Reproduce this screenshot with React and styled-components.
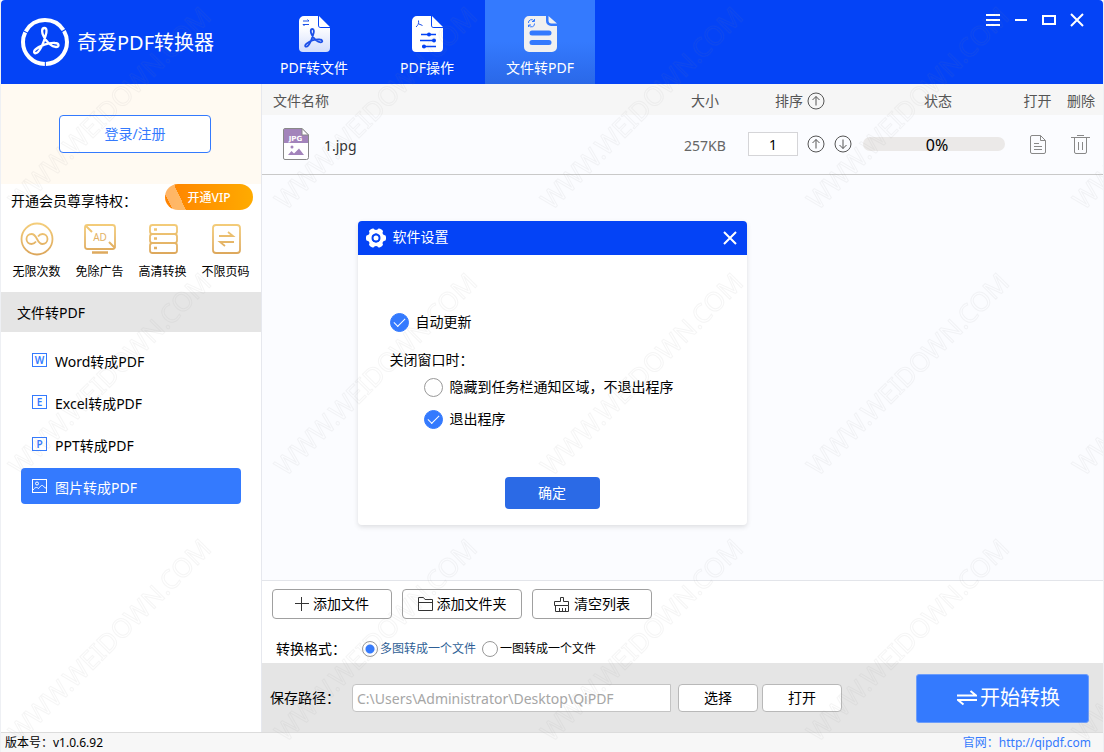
import React, { useState } from "react";
import styled, { createGlobalStyle, css } from "styled-components";

const GlobalStyle = createGlobalStyle`
  *, *::before, *::after { box-sizing: border-box; }
  body {
    margin: 0;
    background: #fff;
    color: #000;
    font: 14px/20px "Noto Sans", "Noto Sans CJK SC", sans-serif;
  }
  button, input { font: inherit; color: inherit; margin: 0; }
  button { cursor: pointer; padding: 0; }
  svg { display: block; flex: none; }
`;

const Window = styled.div`
  position: relative;
  display: flex;
  flex-direction: column;
  min-height: 100vh;
  border-left: 1px solid #eef0f4;
  border-right: 1px solid #eef0f4;
  overflow: hidden;
`;

const Header = styled.header`
  display: flex;
  align-items: stretch;
  height: 84px;
  background: #0443f6;
  color: #fff;
  border-radius: 4px 4px 0 0;
`;

const Brand = styled.div`
  display: flex;
  align-items: center;
  gap: 8px;
  width: 258px;
  padding-left: 20px;
  font-size: 20px;
  line-height: 28px;
`;

const BrandName = styled.span`
  padding-top: 2px;
`;

const Tabs = styled.nav`
  display: flex;
  gap: 3px;
  flex: 1;
`;

const Tab = styled.button`
  display: flex;
  flex-direction: column;
  align-items: center;
  gap: 6px;
  width: 110px;
  padding-top: 16px;
  border: 0;
  background: ${(p) => (p.$active ? "linear-gradient(#347afe 50%, #2a68e8)" : "none")};
`;

const WindowControls = styled.div`
  display: flex;
  height: 40px;
  padding-right: 12px;
`;

const IconButton = styled.button`
  display: flex;
  align-items: center;
  justify-content: center;
  width: ${(p) => p.$width || 28}px;
  border: 0;
  background: none;
`;

const Body = styled.div`
  display: flex;
  flex: 1;
`;

const Sidebar = styled.aside`
  flex: none;
  width: 261px;
  border-right: 1px solid #e6e8ee;
  background: #fff;
`;

const LoginPanel = styled.div`
  display: flex;
  justify-content: center;
  height: 100px;
  padding: 31px 0 31px 8px;
  background: #fffaf2;
`;

const LoginButton = styled.button`
  width: 152px;
  height: 38px;
  border: 1px solid #347afe;
  border-radius: 4px;
  background: #fff;
  color: #347afe;
`;

const VipHead = styled.div`
  display: flex;
  justify-content: space-between;
  padding: 0 8px 0 10px;
  height: 38px;
`;

const VipTitle = styled.div`
  padding-top: 7px;
`;

const VipButton = styled.button`
  width: 88px;
  height: 26px;
  padding-top: 1px;
  border: 0;
  border-radius: 13px;
  color: #fff;
  font-size: 12px;
  font-weight: 500;
  background:
    linear-gradient(65deg, transparent 7px, rgba(255, 255, 255, 0.4) 7px 19px, transparent 19px),
    linear-gradient(90deg, #ff8200, #ffab00);
`;

const Perks = styled.ul`
  display: grid;
  grid-template-columns: repeat(4, 1fr);
  height: 70px;
  margin: 0;
  padding: 0 4px;
  list-style: none;
`;

const Perk = styled.li`
  display: flex;
  flex-direction: column;
  align-items: center;
  gap: 6px;
  font-size: 12px;
`;

const SectionTitle = styled.h2`
  margin: 0;
  padding: 11px 16px 9px;
  background: #e5e5e5;
  font-size: 14px;
  font-weight: 400;
`;

const Menu = styled.nav`
  display: flex;
  flex-direction: column;
  gap: 6px;
  padding: 10px 20px;
`;

const MenuItem = styled.button`
  display: flex;
  align-items: center;
  gap: 8px;
  height: 36px;
  padding: 0 11px;
  border: 0;
  border-radius: 4px;
  background: ${(p) => (p.$active ? "#347afe" : "none")};
  color: ${(p) => (p.$active ? "#fff" : "#000")};
`;

const MenuLabel = styled.span`
  padding-top: 3px;
`;

const Main = styled.main`
  display: flex;
  flex: 1;
  flex-direction: column;
  min-width: 0;
`;

const ListArea = styled.section`
  flex: 1;
  background: #fbfcff;
`;

const FileTable = styled.table`
  width: 100%;
  table-layout: fixed;
  border-collapse: collapse;
`;

const Th = styled.th`
  width: ${(p) => (p.$width ? `${p.$width}px` : "auto")};
  height: 31px;
  padding: ${(p) => (p.$start ? "3px 0 0 11px" : "3px 0 0")};
  background: #f6f6f6;
  color: #555;
  font-weight: 400;
  text-align: ${(p) => (p.$start ? "left" : "center")};
`;

const Td = styled.td`
  height: 59px;
  padding: ${(p) => (p.$text ? "3px 0 0" : "0")};
  border-bottom: 1px solid #c9c9c9;
  color: ${(p) => (p.$muted ? "#666" : "#333")};
  text-align: center;
`;

const FileName = styled.div`
  display: flex;
  align-items: center;
  gap: 15px;
  padding-left: 21px;
`;

const FileLabel = styled.span`
  padding-top: 3px;
`;

const Inline = styled.div`
  display: flex;
  align-items: center;
  justify-content: center;
  gap: ${(p) => p.$gap}px;
`;

const OrderInput = styled.input`
  width: 50px;
  height: 24px;
  border: 1px solid #d5d5d8;
  background: #fff;
  color: #000;
  text-align: center;
`;

const Progress = styled.div`
  display: flex;
  align-items: center;
  justify-content: center;
  width: 142px;
  height: 14px;
  margin: 0 3px;
  padding: 2px 0 0 6px;
  border-radius: 7px;
  background: #ebe9e8;
  color: #000;
  font-size: 16px;
`;

const Tools = styled.section`
  padding: 8px 10px 0;
  border-top: 1px solid #e3e5ea;
  background: #fff;
`;

const ToolRow = styled.div`
  display: flex;
  gap: 10px;
`;

const Button = styled.button`
  display: flex;
  align-items: center;
  justify-content: center;
  gap: 4px;
  width: ${(p) => (p.$small ? 80 : 120)}px;
  height: ${(p) => (p.$small ? 28 : 30)}px;
  border: 1px solid ${(p) => (p.$small ? "#b8b8b8" : "#a0a0a0")};
  border-radius: 4px;
  background: #fff;
`;

const FormatRow = styled.fieldset`
  display: flex;
  align-items: center;
  height: 28px;
  margin: 16px 0 0;
  padding: 0 4px;
  border: 0;
`;

const FormatTitle = styled.span`
  width: 86px;
`;

const FormatOption = styled.label`
  display: flex;
  align-items: center;
  gap: 2px;
  margin-right: 6px;
  font-size: 12px;
  color: ${(p) => (p.$active ? "#2f5f96" : "#000")};
`;

const DotRadio = styled.input`
  appearance: none;
  width: 16px;
  height: 16px;
  border: 1px solid #999;
  border-radius: 50%;
  background: #fff;
  &:checked {
    background: radial-gradient(circle, #347afe 4px, #fff 5px);
  }
`;

const SaveBar = styled.section`
  display: flex;
  align-items: center;
  height: 69px;
  padding: 1px 14px 0 8px;
  background: #e5e5e5;
`;

const PathLabel = styled.label`
  width: 82px;
`;

const PathInput = styled.input`
  flex: 0 1 319px;
  min-width: 0;
  height: 28px;
  margin-right: 7px;
  padding: 0 4px;
  border: 1px solid #c4c4c4;
  border-radius: 4px 0 0 4px;
  background: #fff;
  color: #a6a6a6;
`;

const SaveActions = styled.div`
  display: flex;
  gap: 4px;
`;

const StartButton = styled.button`
  display: flex;
  align-items: center;
  justify-content: center;
  gap: 3px;
  width: 173px;
  height: 49px;
  margin-left: auto;
  padding-left: 12px;
  border: 1px solid #6c9dfb;
  border-radius: 3px;
  background: #347afe;
  color: #fff;
  font-size: 20px;
`;

const StatusBar = styled.footer`
  display: flex;
  justify-content: space-between;
  height: 20px;
  padding: 0 12px 0 4px;
  border-top: 1px solid #dcdcdc;
  background: #f7f7f7;
  font-size: 12px;
`;

const SiteLink = styled.a`
  color: #347afe;
  text-decoration: none;
`;

const Overlay = styled.div`
  position: absolute;
  inset: 0;
  display: flex;
  align-items: center;
  justify-content: center;
  padding-bottom: 6px;
`;

const Dialog = styled.section`
  width: 389px;
  border-radius: 4px;
  background: #fff;
  box-shadow: 0 2px 5px rgba(0, 0, 0, 0.12);
`;

const DialogHead = styled.header`
  display: flex;
  align-items: center;
  gap: 7px;
  height: 34px;
  padding: 0 3px 0 8px;
  border-radius: 4px 4px 0 0;
  background: #0443f6;
  color: #fff;
`;

const DialogTitle = styled.h1`
  flex: 1;
  margin: 0;
  padding-bottom: 2px;
  font-size: 14px;
  font-weight: 400;
`;

const DialogBody = styled.form`
  padding: 57px 32px 16px;
`;

const DialogGroup = styled.fieldset`
  margin: 18px 0 48px;
  padding: 0;
  border: 0;
`;

const GroupTitle = styled.legend`
  padding: 0;
  margin-bottom: 7px;
`;

const Options = styled.div`
  display: flex;
  flex-direction: column;
  gap: 12px;
  padding-left: 34px;
`;

const Choice = styled.label`
  display: flex;
  align-items: center;
  gap: 7px;
`;

const checkMark = css`
  appearance: none;
  position: relative;
  flex: none;
  width: 19px;
  height: 19px;
  border: 1px solid #999;
  border-radius: 50%;
  background: #fff;
  &:checked { border-color: #347afe; background: #347afe; }
  &:checked::after {
    content: "";
    position: absolute;
    left: 3px;
    top: 4px;
    width: 11px;
    height: 6px;
    border: solid #fff;
    border-width: 0 0 1px 1px;
    transform: rotate(-45deg);
  }
`;

const RoundCheck = styled.input`
  ${checkMark}
`;

const OkButton = styled.button`
  display: block;
  width: 95px;
  height: 32px;
  margin: 0 auto;
  border: 0;
  border-radius: 4px;
  background: #2b6ae6;
  color: #fff;
`;

const WatermarkLayer = styled.svg`
  position: absolute;
  inset: 0;
  width: 100%;
  height: 100%;
  pointer-events: none;
`;

function Watermark() {
  return (
    <WatermarkLayer aria-hidden="true">
      <defs>
        <pattern id="mark" width="266" height="266" patternUnits="userSpaceOnUse">
          <text
            transform="translate(19 211) rotate(-45)"
            fontFamily="Noto Sans"
            fontSize="26"
            fill="none"
            stroke="#808080"
            strokeOpacity="0.08"
            strokeWidth="1"
          >
            WWW.WEIDOWN.COM
          </text>
        </pattern>
      </defs>
      <rect width="100%" height="100%" fill="url(#mark)" />
    </WatermarkLayer>
  );
}

/* The three-looped ribbon used by the logo and the document icon. */
const ribbon =
  "M23.500 10C20 10 21 15 22.500 18 25 24 31 29 35 29c4 0 3-4-1-4-7-.5-15 3-19 6-4 3-1 6 2 3 4-4 6-11 7.500-16 1.500-4 1.500-8-1-8z";

function LogoIcon() {
  return (
    <svg width="48" height="48" viewBox="0 0 48 48" fill="none" stroke="#fff">
      <circle cx="24" cy="24" r="22" strokeWidth="4" strokeDasharray="45 1.08" strokeDashoffset="-11" transform="rotate(-180 24 24)" />
      <path d={ribbon} strokeWidth="2.300" strokeLinejoin="round" />
    </svg>
  );
}

function DocShape({ fill = "#fff" }) {
  return (
    <path d="M5 0h14v9a3 3 0 0 0 3 3h9v20a4 4 0 0 1-4 4H4a4 4 0 0 1-4-4V5a5 5 0 0 1 5-5zM20 0l11 11h-9.500a1.500 1.500 0 0 1-1.500-1.500z" fill={fill} />
  );
}

function PdfToFileIcon() {
  return (
    <svg width="31" height="36" viewBox="0 0 31 36" fill="none">
      <defs>
        <linearGradient id="docFade" x2="0" y2="1">
          <stop offset="0.3" stopColor="#fff" />
          <stop offset="1" stopColor="#d3defc" />
        </linearGradient>
      </defs>
      <DocShape fill="url(#docFade)" />
      <path d="M4 5h6L8.500 3.500M10 8.500H4L5.500 10" stroke="#1c50e8" />
      <g transform="translate(-3 6) scale(.7)">
        <path d={ribbon} stroke="#1c50e8" strokeWidth="2.600" />
      </g>
    </svg>
  );
}

function PdfActionIcon() {
  return (
    <svg width="31" height="36" viewBox="0 0 31 36" fill="none">
      <DocShape />
      <path d="M6.500 4.500C7 8 6 9 4 11M7 8l3.500 1.500" stroke="#1c50e8" />
      <path d="M9 18.500h15M8 24.500h15M10 30.500h14" stroke="#0443f6" strokeWidth="1.500" />
      <g fill="#0443f6">
        <circle cx="17" cy="18.500" r="2" />
        <circle cx="22" cy="24.500" r="2" />
        <circle cx="12" cy="30.500" r="2" />
      </g>
    </svg>
  );
}

function FileToPdfIcon() {
  return (
    <svg width="33" height="36" viewBox="0 0 33 36" fill="none">
      <path d="M5 0h17v5a5 5 0 0 0 5 5h6v21a5 5 0 0 1-5 5H5a5 5 0 0 1-5-5V5a5 5 0 0 1 5-5zM24.500 0 33 7.500h-5.500a3 3 0 0 1-3-3z" fill="#f0f0f0" />
      <path d="M4.500 7a3 3 0 0 1 5.500-2M10.500 7.500A3 3 0 0 1 5 9.500M10.500 3v2.500H8M4.500 11V9H7" stroke="#347afe" />
      <path d="M8 17h17M8 26.500h17" stroke="#347afe" strokeWidth="5" strokeLinecap="round" />
    </svg>
  );
}

function CloseIcon() {
  return (
    <svg width="14" height="14" viewBox="0 0 14 14" stroke="#fff" strokeWidth="2">
      <path d="m1 1 12 12M13 1 1 13" />
    </svg>
  );
}

function Gold({ children }) {
  return (
    <svg width="34" height="34" viewBox="0 0 34 34" fill="none" stroke="url(#gold)" strokeWidth="1.800">
      <defs>
        <linearGradient id="gold" gradientUnits="userSpaceOnUse" x1="0" y1="0" x2="0" y2="34">
          <stop stopColor="#f5cf7c" />
          <stop offset="1" stopColor="#dba55a" />
        </linearGradient>
      </defs>
      {children}
    </svg>
  );
}

const perks = [
  {
    label: "无限次数",
    icon: (
      <Gold>
        <circle cx="17" cy="17" r="15.500" />
        <path d="M16 19.500c-1.200 1.700-2.500 2.500-4.500 2.500a5 5 0 0 1 0-10c6 0 5 10 11 10a5 5 0 0 0 0-10c-2 0-3.300.8-4.500 2.500" />
      </Gold>
    ),
  },
  {
    label: "免除广告",
    icon: (
      <Gold>
        <rect x="2" y="3" width="30" height="24" rx="2.500" />
        <path d="M9 30.500h16" strokeWidth="2.500" />
        <path d="m3 4 6 6M26 20l6 6" strokeWidth="2" />
        <text x="17" y="19" textAnchor="middle" fontSize="10" fill="#e3b265" stroke="none">AD</text>
      </Gold>
    ),
  },
  {
    label: "高清转换",
    icon: (
      <Gold>
        <rect x="4" y="3" width="27" height="9" rx="2.500" />
        <rect x="4" y="12" width="27" height="9" rx="2.500" />
        <rect x="4" y="21" width="27" height="10" rx="2.500" />
        <path d="M8 7.500h3M8 16.500h3M8 26h3" strokeWidth="2.500" />
      </Gold>
    ),
  },
  {
    label: "不限页码",
    icon: (
      <Gold>
        <rect x="4" y="3" width="27" height="28" rx="3" />
        <path d="M10 14h14l-5-4M25 20H11l5 4" />
      </Gold>
    ),
  },
];

function LetterIcon({ letter }) {
  return (
    <svg width="15" height="14" viewBox="0 0 15 14" fill="none">
      <rect x=".5" y=".5" width="14" height="13" stroke="#347afe" />
      <text x="7.500" y="10.500" textAnchor="middle" fontSize="10" fontWeight="600" fill="#347afe">{letter}</text>
    </svg>
  );
}

function ImageIcon() {
  return (
    <svg width="15" height="14" viewBox="0 0 15 14" fill="none" stroke="#fff">
      <rect x=".5" y=".5" width="14" height="13" />
      <circle cx="5" cy="4.500" r="1.500" />
      <path d="M1 11c2-3 4-3 5.500-1.500C8 8 9 6 10.500 6.500S12 9 14 9" />
    </svg>
  );
}

function ArrowCircle({ down }) {
  return (
    <svg width="18" height="18" viewBox="0 0 18 18" fill="none" stroke="#555">
      <circle cx="9" cy="9" r="8" />
      <path d={down ? "M9 4.500v9M5.500 10 9 13.500l3.500-3.500" : "M9 13.500v-9M5.500 8 9 4.500 12.500 8"} />
    </svg>
  );
}

function JpgIcon() {
  return (
    <svg width="26" height="32" viewBox="0 0 26 32">
      <path d="M2 .5h17l6.500 6.500v22.500a2 2 0 0 1-2 2H2a1.500 1.500 0 0 1-1.500-1.500V2A1.500 1.500 0 0 1 2 .5z" fill="#fff" stroke="#888" />
      <path d="M1 1h18v6h6v8H1z" fill="#a384bb" />
      <path d="M19 .5 25.500 7H19z" fill="#fff" stroke="#888" />
      <text x="12.500" y="13" textAnchor="middle" fontFamily="DejaVu Sans" fontSize="7" fontWeight="700" fill="#fff">JPG</text>
      <circle cx="9" cy="19" r="1.500" fill="#a384bb" />
      <path d="m5 27 3.500-4 2.500 2.500 5-5L21 27z" fill="#a384bb" />
    </svg>
  );
}

function SheetIcon() {
  return (
    <svg width="16" height="19" viewBox="0 0 16 19" fill="none" stroke="#888">
      <path d="M2 .5h8.500l5 5v11.500a1.500 1.500 0 0 1-1.500 1.500H2A1.500 1.500 0 0 1 .5 17V2A1.500 1.500 0 0 1 2 .5zM10.500 .5v5h5M4 8.500h5M4 11.500h8M4 14.500h8" />
    </svg>
  );
}

function TrashIcon() {
  return (
    <svg width="19" height="19" viewBox="0 0 19 19" fill="none" stroke="#888">
      <path d="M0 2.500h19M6 .5h7M3.500 2.500V17A1.500 1.500 0 0 0 5 18.500h9a1.500 1.500 0 0 0 1.500-1.500V2.500M7.500 7v8M11.500 7v8" />
    </svg>
  );
}

function PlusIcon() {
  return (
    <svg width="14" height="14" viewBox="0 0 14 14" stroke="#333">
      <path d="M6.500 0v14M0 6.500h14" />
    </svg>
  );
}

function FolderIcon() {
  return (
    <svg width="15" height="14" viewBox="0 0 15 14" fill="none" stroke="#333">
      <path d="M.5 13.500V.5h5l1.500 2h7.500v11zM.5 5.500h14" />
    </svg>
  );
}

function ClearIcon() {
  return (
    <svg width="16" height="15" viewBox="0 0 16 15" fill="none" stroke="#333">
      <path d="M6.500 4.500v-4h3v4h5v4H.5v-4h6M1.500 8.500v6h13v-6M5.500 14v-3M8.500 14v-3M11.500 14v-3" />
    </svg>
  );
}

function SwapIcon() {
  return (
    <svg width="20" height="16" viewBox="0 0 20 16" fill="none" stroke="#fff" strokeWidth="2">
      <path d="M0 5.500h19L13.500 1M20 10H1l5.500 4.500" />
    </svg>
  );
}

function GearIcon() {
  const teeth = [0, 60, 120, 180, 240, 300];
  return (
    <svg width="20" height="20" viewBox="0 0 20 20">
      {teeth.map((a) => (
        <rect key={a} x="7" y="0" width="6" height="6" rx="2" fill="#fff" transform={`rotate(${a + 30} 10 10)`} />
      ))}
      <circle cx="10" cy="10" r="6.500" fill="none" stroke="#fff" strokeWidth="3.500" />
      <circle cx="10" cy="10" r="4.500" fill="#0443f6" />
      <circle cx="10" cy="10" r="2.500" fill="#fff" />
    </svg>
  );
}

const tabs = [
  { label: "PDF转文件", icon: <PdfToFileIcon /> },
  { label: "PDF操作", icon: <PdfActionIcon /> },
  { label: "文件转PDF", icon: <FileToPdfIcon /> },
];

const menu = [
  { label: "Word转成PDF", icon: <LetterIcon letter="W" /> },
  { label: "Excel转成PDF", icon: <LetterIcon letter="E" /> },
  { label: "PPT转成PDF", icon: <LetterIcon letter="P" /> },
  { label: "图片转成PDF", icon: <ImageIcon /> },
];

const formats = ["多图转成一个文件", "一图转成一个文件"];
const closeActions = ["隐藏到任务栏通知区域，不退出程序", "退出程序"];

function SettingsDialog({ onClose }) {
  const [action, setAction] = useState(1);
  return (
    <Overlay>
      <Dialog role="dialog" aria-labelledby="settings-title">
        <DialogHead>
          <GearIcon />
          <DialogTitle id="settings-title">软件设置</DialogTitle>
          <IconButton type="button" aria-label="关闭" onClick={onClose}><CloseIcon /></IconButton>
        </DialogHead>
        <DialogBody onSubmit={(e) => { e.preventDefault(); onClose(); }}>
          <Choice>
            <RoundCheck type="checkbox" defaultChecked />
            自动更新
          </Choice>
          <DialogGroup>
            <GroupTitle>关闭窗口时：</GroupTitle>
            <Options>
              {closeActions.map((label, i) => (
                <Choice key={label}>
                  <RoundCheck type="radio" name="close" checked={action === i} onChange={() => setAction(i)} />
                  {label}
                </Choice>
              ))}
            </Options>
          </DialogGroup>
          <OkButton type="submit">确定</OkButton>
        </DialogBody>
      </Dialog>
    </Overlay>
  );
}

export default function App() {
  const [tab, setTab] = useState(2);
  const [item, setItem] = useState(3);
  const [format, setFormat] = useState(0);
  const [settings, setSettings] = useState(true);

  return (
    <>
      <GlobalStyle />
      <Window lang="zh-CN">
        <Header>
          <Brand><LogoIcon /><BrandName>奇爱PDF转换器</BrandName></Brand>
          <Tabs>
            {tabs.map((t, i) => (
              <Tab key={t.label} $active={tab === i} onClick={() => setTab(i)}>
                {t.icon}
                {t.label}
              </Tab>
            ))}
          </Tabs>
          <WindowControls>
            <IconButton aria-label="菜单" onClick={() => setSettings(true)}>
              <svg width="14" height="12" viewBox="0 0 14 12" stroke="#fff" strokeWidth="2"><path d="M0 1h14M0 6h14M0 11h14" /></svg>
            </IconButton>
            <IconButton aria-label="最小化">
              <svg width="12" height="2" viewBox="0 0 12 2" stroke="#fff" strokeWidth="2"><path d="M0 1h12" /></svg>
            </IconButton>
            <IconButton aria-label="最大化">
              <svg width="14" height="10" viewBox="0 0 14 10" stroke="#fff" strokeWidth="2" fill="none"><rect x="1" y="1" width="12" height="8" /></svg>
            </IconButton>
            <IconButton aria-label="关闭"><CloseIcon /></IconButton>
          </WindowControls>
        </Header>

        <Body>
          <Sidebar>
            <LoginPanel><LoginButton>登录/注册</LoginButton></LoginPanel>
            <VipHead>
              <VipTitle>开通会员尊享特权：</VipTitle>
              <VipButton>开通VIP</VipButton>
            </VipHead>
            <Perks>
              {perks.map((p) => (
                <Perk key={p.label}>{p.icon}{p.label}</Perk>
              ))}
            </Perks>
            <SectionTitle>文件转PDF</SectionTitle>
            <Menu>
              {menu.map((m, i) => (
                <MenuItem key={m.label} $active={item === i} onClick={() => setItem(i)}>
                  {m.icon}
                  <MenuLabel>{m.label}</MenuLabel>
                </MenuItem>
              ))}
            </Menu>
          </Sidebar>

          <Main>
            <ListArea>
              <FileTable>
                <thead>
                  <tr>
                    <Th $start>文件名称</Th>
                    <Th $width={70}>大小</Th>
                    <Th $width={120}>
                      <Inline $gap={4}>
                        排序
                        <IconButton $width={18} aria-label="按顺序排列"><ArrowCircle /></IconButton>
                      </Inline>
                    </Th>
                    <Th $width={156}>状态</Th>
                    <Th $width={43}>打开</Th>
                    <Th $width={44}>删除</Th>
                  </tr>
                </thead>
                <tbody>
                  <tr>
                    <Td><FileName><JpgIcon /><FileLabel>1.jpg</FileLabel></FileName></Td>
                    <Td $muted $text>257KB</Td>
                    <Td>
                      <Inline $gap={9}>
                        <OrderInput aria-label="排序" defaultValue="1" inputMode="numeric" />
                        <IconButton $width={18} aria-label="上移"><ArrowCircle /></IconButton>
                        <IconButton $width={18} aria-label="下移"><ArrowCircle down /></IconButton>
                      </Inline>
                    </Td>
                    <Td><Progress role="progressbar" aria-valuenow={0}>0%</Progress></Td>
                    <Td><IconButton $width={43} aria-label="打开"><SheetIcon /></IconButton></Td>
                    <Td><IconButton $width={43} aria-label="删除"><TrashIcon /></IconButton></Td>
                  </tr>
                </tbody>
              </FileTable>
            </ListArea>

            <Tools>
              <ToolRow>
                <Button><PlusIcon />添加文件</Button>
                <Button><FolderIcon />添加文件夹</Button>
                <Button><ClearIcon />清空列表</Button>
              </ToolRow>
              <FormatRow>
                <FormatTitle>转换格式：</FormatTitle>
                {formats.map((label, i) => (
                  <FormatOption key={label} $active={format === i}>
                    <DotRadio type="radio" name="format" checked={format === i} onChange={() => setFormat(i)} />
                    {label}
                  </FormatOption>
                ))}
              </FormatRow>
            </Tools>

            <SaveBar>
              <PathLabel htmlFor="path">保存路径：</PathLabel>
              <PathInput id="path" defaultValue={"C:\\Users\\Administrator\\Desktop\\QiPDF"} />
              <SaveActions>
                <Button $small>选择</Button>
                <Button $small>打开</Button>
              </SaveActions>
              <StartButton><SwapIcon />开始转换</StartButton>
            </SaveBar>
          </Main>
        </Body>

        <StatusBar>
          <span>版本号：v1.0.6.92</span>
          <SiteLink href="http://qipdf.com">官网：http://qipdf.com</SiteLink>
        </StatusBar>

        {settings && <SettingsDialog onClose={() => setSettings(false)} />}
        <Watermark />
      </Window>
    </>
  );
}
